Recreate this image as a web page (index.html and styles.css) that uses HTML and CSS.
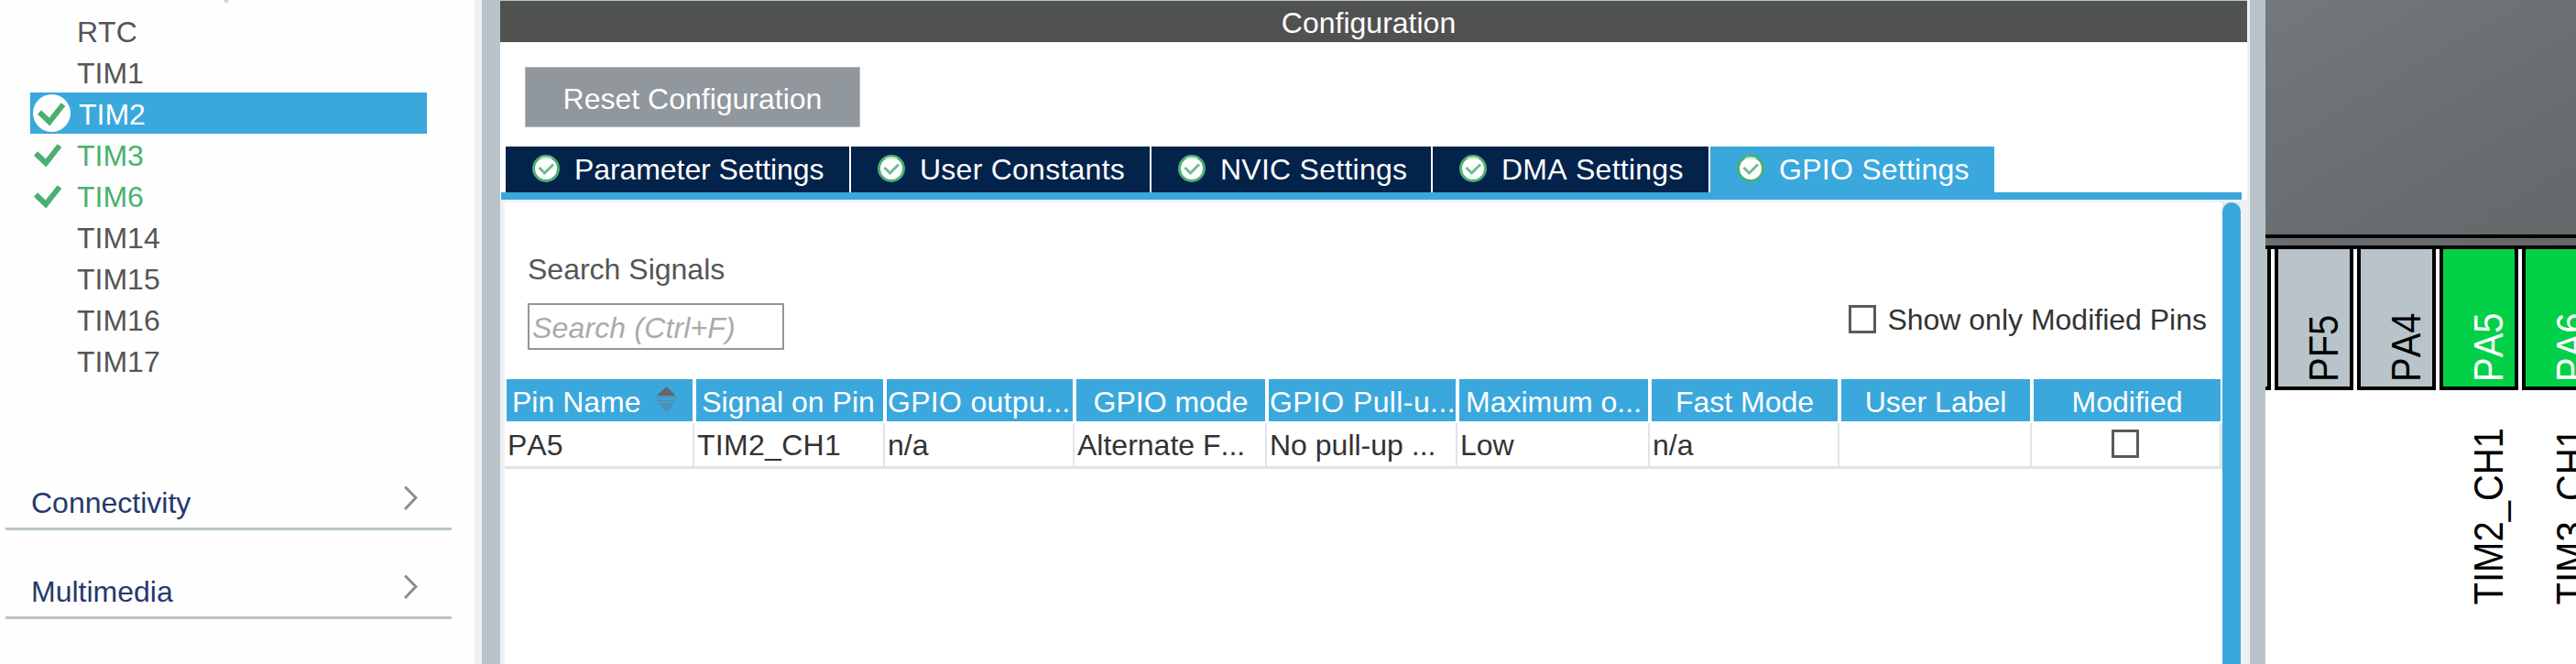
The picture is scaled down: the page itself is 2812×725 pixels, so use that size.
FILE: index.html
```html
<!DOCTYPE html>
<html lang="en">
<head>
<meta charset="utf-8">
<title>Configuration</title>
<link rel="stylesheet" href="styles.css">
</head>
<body>
<svg class="defs" aria-hidden="true">
  <symbol id="check" viewBox="0 0 32 28">
    <path d="M3 12.5 L14 23 L29 4" fill="none" stroke="#4caf72" stroke-width="6"/>
  </symbol>
  <symbol id="badge" viewBox="0 0 30 30">
    <circle cx="15" cy="15" r="13.500" fill="#fff" stroke="#4caf72" stroke-width="3"/>
    <path d="M9 4.6 Q15 2.600 21 4.600" fill="none" stroke="#d3ebdc" stroke-width="2.500"/>
    <path d="M7.500 14 L13.500 20 L23 10.500" fill="none" stroke="#6cbf8b" stroke-width="3"/>
  </symbol>
  <symbol id="chevron" viewBox="0 0 15 28">
    <path d="M1 1.500 L13 13.500 L1 26" fill="none" stroke="#8c8c8c" stroke-width="3"/>
  </symbol>
</svg>
<div class="app">
  <aside class="sidebar">
    <div class="sort-tip"></div>
    <ul class="peripherals">
      <li>RTC</li>
      <li>TIM1</li>
      <li class="selected"><span class="disc"><svg class="check"><use href="#check"/></svg></span>TIM2</li>
      <li class="ok"><svg class="check"><use href="#check"/></svg>TIM3</li>
      <li class="ok"><svg class="check"><use href="#check"/></svg>TIM6</li>
      <li>TIM14</li>
      <li>TIM15</li>
      <li>TIM16</li>
      <li>TIM17</li>
    </ul>
    <div class="category"><span>Connectivity</span><svg class="chevron"><use href="#chevron"/></svg></div>
    <div class="category"><span>Multimedia</span><svg class="chevron"><use href="#chevron"/></svg></div>
  </aside>
  <div class="gutter"></div>
  <div class="divider"></div>
  <main class="config">
    <header class="title">Configuration</header>
    <button class="reset">Reset Configuration</button>
    <nav class="tabs">
      <div class="tab t1"><svg class="badge"><use href="#badge"/></svg>Parameter Settings</div>
      <div class="tab t2"><svg class="badge"><use href="#badge"/></svg>User Constants</div>
      <div class="tab t3"><svg class="badge"><use href="#badge"/></svg>NVIC Settings</div>
      <div class="tab t4"><svg class="badge"><use href="#badge"/></svg>DMA Settings</div>
      <div class="tab t5 active"><svg class="badge"><use href="#badge"/></svg>GPIO Settings</div>
    </nav>
    <div class="tabline"></div>
    <section class="pane">
      <div class="content">
        <div class="tools">
          <div class="search">
            <div class="search-label">Search Signals</div>
            <div class="search-box">Search (Ctrl+F)</div>
          </div>
          <div class="only-modified"><span class="box"></span>Show only Modified Pins</div>
        </div>
        <div class="grid head">
          <div class="left">Pin Name<svg class="sort" viewBox="0 0 23 28"><path d="M11.500 0 L21 9 V10 H2 V9Z" fill="#666"/><path d="M0 11.500 H23 M1 15.500 H22" stroke="#4b92b5" stroke-width="2"/><path d="M2 18 H21 L11.500 28Z" fill="#4b92b5"/></svg></div>
          <div class="signal">Signal on Pin</div>
          <div class="clip">GPIO outpu...</div>
          <div>GPIO mode</div>
          <div class="clip wide">GPIO Pull-u...</div>
          <div>Maximum o...</div>
          <div>Fast Mode</div>
          <div>User Label</div>
          <div>Modified</div>
        </div>
        <div class="grid row">
          <div>PA5</div>
          <div class="name">TIM2_CH1</div>
          <div>n/a</div>
          <div>Alternate F...</div>
          <div>No pull-up ...</div>
          <div>Low</div>
          <div>n/a</div>
          <div></div>
          <div class="mark"><span class="box"></span></div>
        </div>
      </div>
      <div class="scroll"><div class="thumb"></div></div>
    </section>
  </main>
  <div class="edge"></div>
  <div class="divider narrow"></div>
  <svg class="pinout" viewBox="2473 0 339 725">
    <defs>
      <linearGradient id="chip" gradientUnits="userSpaceOnUse" x1="2473" y1="0" x2="2700" y2="390">
        <stop offset="0" stop-color="#73787b"/>
        <stop offset="0.5" stop-color="#696e70"/>
        <stop offset="1" stop-color="#626667"/>
      </linearGradient>
    </defs>
    <rect x="2473" y="0" width="339" height="272" fill="url(#chip)"/>
    <g stroke="#000" stroke-width="4">
      <rect x="2395" y="270" width="82" height="154" fill="#b8c4ca"/>
      <rect x="2485" y="270" width="82" height="154" fill="#b8c4ca"/>
      <rect x="2575" y="270" width="82" height="154" fill="#b8c4ca"/>
      <rect x="2665" y="270" width="82" height="154" fill="#02d046"/>
      <rect x="2755" y="270" width="82" height="154" fill="#02d046"/>
    </g>
    <path d="M2473 258 H2812 M2473 270 H2812" stroke="#000" stroke-width="4"/>
    <g class="pin-text">
      <text transform="translate(2552 417) rotate(-90) scale(.92 1)">PF5</text>
      <text transform="translate(2642 417) rotate(-90) scale(.92 1)">PA4</text>
      <text class="on" transform="translate(2732 417) rotate(-90) scale(.92 1)">PA5</text>
      <text class="on" transform="translate(2822 417) rotate(-90) scale(.92 1)">PA6</text>
      <text transform="translate(2732 660.5) rotate(-90) scale(.92 1)">TIM2_CH1</text>
      <text transform="translate(2822 660.5) rotate(-90) scale(.92 1)">TIM3_CH1</text>
    </g>
  </svg>
</div>
</body>
</html>
```

FILE: styles.css
```css
* { box-sizing: border-box; }
body {
  margin: 0;
  background: #fff;
  color: #333;
  font: 32px/48px "Liberation Sans", Arial, sans-serif;
  font-kerning: none;
  white-space: nowrap;
  overflow: hidden;
}
.defs { display: none; }
.app { display: flex; width: 2812px; height: 725px; overflow: hidden; }
svg { display: block; flex: none; }

.sidebar { width: 518px; background: #fefefe; }
.sort-tip { width: 6px; height: 3px; margin: 0 0 8px 244px; background: #d6d6d6; border-radius: 0 0 3px 3px; }
.peripherals { list-style: none; margin: 0 52px 0 33px; padding: 0; color: #555; }
.peripherals { padding-top: 0; }
.peripherals li { display: flex; height: 45px; padding-left: 51px; }
.peripherals .ok { padding-left: 3px; color: #46b36d; }
.peripherals .selected { padding-left: 3px; background: #3aa8dc; color: #fff; }
.check { width: 32px; height: 28px; margin: 9px 16px 0 0; }
.disc { width: 41px; height: 41px; margin: 2px 9px 0 0; border-radius: 50%; background: #fff; }
.disc .check { margin: 7px 0 0 4px; }
.category {
  display: flex;
  justify-content: space-between;
  height: 97px;
  margin: 0 25px 0 6px;
  padding: 43px 37px 0 28px;
  border-bottom: 3px solid #b8c4ca;
  color: #25396c;
}
.peripherals + .category { margin-top: 66px; }
.chevron { width: 15px; height: 28px; margin-top: 5px; }

.gutter { width: 8px; background: #f0f1f4; }
.divider { width: 20px; background: #b8c4ca; }
.divider.narrow { width: 17px; }
.edge { width: 3px; background: #f0f1f4; }

.config { display: flex; flex-direction: column; width: 1907px; height: 725px; }
.config > * { flex-shrink: 0; }
.title {
  height: 46px;
  padding-right: 11px;
  border-top: 1px solid #b8c4ca;
  background: #505250;
  color: #fff;
  text-align: center;
}
.reset {
  width: 366px;
  height: 66px;
  margin: 27px 0 21px 27px;
  padding: 3px 0 0;
  border: 1px solid #b4babf;
  background: #90979d;
  color: #fff;
  font: inherit;
}
.tabs { display: flex; gap: 2px; height: 50px; padding-left: 6px; line-height: 50px; color: #fff; }
.tab { display: flex; gap: 16px; padding-left: 29px; background: #03234b; letter-spacing: .25px; }
.tab.active { background: #3aa8dc; }
.t1 { width: 375px; letter-spacing: -.08px; }
.t2 { width: 326px; }
.t3 { width: 305px; }
.t4 { width: 301px; }
.t5 { width: 310px; }
.badge { width: 30px; height: 30px; margin-top: 9px; }
.tabline { height: 8px; margin: 0 6px 0 1px; background: #3aa8dc; }

.config > .pane { display: flex; flex: 1 0 0; min-height: 0; border: solid #f0f1f4; border-width: 3px 7px 0 5px; }
.content { width: 1875px; padding-top: 49px; }
.tools { display: flex; justify-content: space-between; height: 144px; padding: 0 17px 0 25px; }
.search-label { height: 61px; color: #555; }
.search-box {
  width: 280px;
  height: 51px;
  padding-left: 3px;
  border: 2px solid #8f979e;
  color: #aaa;
  font-style: italic;
  line-height: 51px;
  letter-spacing: .15px;
}
.only-modified { display: flex; padding-top: 55px; }
.box { width: 30px; height: 31px; border: 3px solid #5a5a5a; background: #fff; }
.only-modified .box { margin: 8px 12px 0 0; }

.grid { display: grid; grid-template-columns: 207px 208px 207px 210px 208px 210px 207px 210px 208px; }
.head { height: 48px; color: #fff; line-height: 50px; text-align: center; }
.head > div { height: 46px; margin: 0 2px; background: #3aa8dc; overflow: hidden; }
.head > .clip { text-align: left; padding-left: 1px; letter-spacing: .3px; }
.head > .wide { letter-spacing: .4px; }
.head > .left { display: flex; padding-left: 6px; }
.head > .signal { padding-right: 3px; }
.sort { width: 23px; height: 28px; margin: 8px 0 0 16px; }
.row { height: 50px; border-bottom: 3px solid #e1e4e7; }
.row > div { padding-left: 3px; border-right: 2px solid #e1e4e7; }
.row > .name { letter-spacing: .3px; }
.row > .mark { padding: 7px 0 0 87px; border-right-width: 3px; }
.mark .box { display: block; }

.scroll { display: flex; width: 20px; background: linear-gradient(#dce8f5 50%, #3aa8dc 50%); }
.thumb { flex: 1; border-radius: 10px 10px 0 0; background: #3aa8dc; }

.pinout { width: 339px; height: 725px; background: #fff; }
.pin-text { font-size: 43.5px; fill: #000; }
.pin-text .on { fill: #fff; }
```
